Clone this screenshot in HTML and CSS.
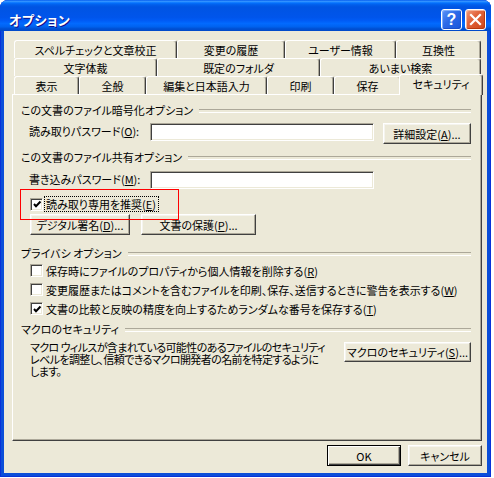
FILE: index.html
```html
<!DOCTYPE html>
<html lang="ja">
<head>
<meta charset="utf-8">
<title>オプション</title>
<link rel="stylesheet" href="styles.css">
</head>
<body>
<div class="window">
  <div class="titlebar">
    <span class="title">オプション</span>
    <div class="caption-buttons">
      <span class="cap-btn help">?</span>
      <span class="cap-btn close">
        <svg width="13" height="13" viewBox="0 0 13 13"><path d="M2 2 L11 11 M11 2 L2 11" stroke="#fff" stroke-width="2.2" stroke-linecap="square" fill="none"/></svg>
      </span>
    </div>
  </div>
  <div class="client">
    <div class="tabs">
      <div class="tab-row row1">
        <div class="tab">スペルチェックと文章校正</div>
        <div class="tab">変更の履歴</div>
        <div class="tab">ユーザー情報</div>
        <div class="tab">互換性</div>
      </div>
      <div class="tab-row row2">
        <div class="tab">文字体裁</div>
        <div class="tab">既定のフォルダ</div>
        <div class="tab">あいまい検索</div>
      </div>
      <div class="tab-row row3">
        <div class="tab">表示</div>
        <div class="tab">全般</div>
        <div class="tab">編集と日本語入力</div>
        <div class="tab">印刷</div>
        <div class="tab">保存</div>
        <div class="tab selected">セキュリティ</div>
      </div>
    </div>
    <div class="panel">
      <div class="group-header g1">この文書のファイル暗号化オプション</div>
      <div class="field f1">
        <span class="field-label">読み取りパスワード(<u>O</u>):</span>
        <span class="input"></span>
        <button class="btn btn-adv">詳細設定(<u>A</u>)...</button>
      </div>
      <div class="group-header g2">この文書のファイル共有オプション</div>
      <div class="field f2">
        <span class="field-label">書き込みパスワード(<u>M</u>):</span>
        <span class="input"></span>
      </div>
      <div class="check-row focus-row">
        <span class="check checked"><svg width="9" height="9" viewBox="0 0 9 9"><path d="M1 4 L3 6.2 L7.5 1.5" stroke="#000" stroke-width="2" fill="none"/></svg></span>
        <span class="focus-label">読み取り専用を推奨(<u>E</u>)</span>
      </div>
      <div class="button-row">
        <button class="btn btn-sign">デジタル署名(<u>D</u>)...</button>
        <button class="btn btn-protect">文書の保護(<u>P</u>)...</button>
      </div>
      <div class="group-header g3">プライバシ オプション</div>
      <div class="check-list">
        <div class="check-row">
          <span class="check"></span>
          <span class="check-label">保存時にファイルのプロパティから個人情報を削除する(<u>R</u>)</span>
        </div>
        <div class="check-row">
          <span class="check"></span>
          <span class="check-label">変更履歴またはコメントを含むファイルを印刷、保存、送信するときに警告を表示する(<u>W</u>)</span>
        </div>
        <div class="check-row">
          <span class="check checked"><svg width="9" height="9" viewBox="0 0 9 9"><path d="M1 4 L3 6.2 L7.5 1.5" stroke="#000" stroke-width="2" fill="none"/></svg></span>
          <span class="check-label">文書の比較と反映の精度を向上するためランダムな番号を保存する(<u>T</u>)</span>
        </div>
      </div>
      <div class="group-header g4">マクロのセキュリティ</div>
      <div class="macro-row">
        <p class="macro-text">マクロ ウィルスが含まれている可能性のあるファイルのセキュリティ<br>レベルを調整し、信頼できるマクロ開発者の名前を特定するように<br>します。</p>
        <button class="btn btn-macro">マクロのセキュリティ(<u>S</u>)...</button>
      </div>
      <div class="highlight"></div>
    </div>
    <div class="dialog-buttons">
      <button class="btn btn-dlg default">OK</button>
      <button class="btn btn-dlg">キャンセル</button>
    </div>
  </div>
</div>
</body>
</html>
```

FILE: styles.css
```css
* { box-sizing: border-box; }

body {
  margin: 0;
  background: #fff;
  font-family: "Noto Sans CJK JP", "Liberation Sans", sans-serif;
  font-size: 11px;
  font-feature-settings: "palt";
  color: #000;
}

.window {
  width: 491px;
  height: 477px;
  display: flex;
  flex-direction: column;
  background: #0B4ED9;
  border-radius: 8px 8px 0 0;
  overflow: hidden;
  box-shadow: inset 1px 0 #0831D9, inset -1px 0 #0831D9, inset 0 -1px #0831D9;
}

.titlebar {
  height: 31px;
  flex: none;
  display: flex;
  align-items: center;
  padding: 8px 5px 0 9px;
  background: linear-gradient(to bottom,
    #0058EE 0%, #3593FF 4%, #288EFF 6%, #127DFF 8%, #036FFC 10%,
    #0262EE 14%, #0057E5 20%, #0054E3 24%, #0055EB 56%, #005BF5 66%,
    #026AFE 76%, #0062EF 86%, #0052D6 92%, #0048C8 100%);
}

.title {
  flex: 1;
  color: #fff;
  font-weight: bold;
  font-size: 13px;
  letter-spacing: 0.5px;
  text-shadow: 1px 1px #0F1089;
}

.caption-buttons {
  display: flex;
  gap: 3px;
}

.cap-btn {
  width: 21px;
  height: 21px;
  border: 1px solid #fff;
  border-radius: 3px;
  display: flex;
  align-items: center;
  justify-content: center;
}

.help {
  background: linear-gradient(135deg, #5C95F8 0%, #2D6AE8 45%, #1A55DA 100%);
  box-shadow: inset -1px -1px #1C4FC9, inset 1px 1px #7FAEFB;
  color: #fff;
  font-family: "Liberation Sans", sans-serif;
  font-weight: bold;
  font-size: 16px;
  line-height: 1;
}

.close {
  background: linear-gradient(135deg, #F09A7B 0%, #E2643C 40%, #CC4518 100%);
  box-shadow: inset -1px -1px #B8390F, inset 1px 1px #F4B39A;
}

.client {
  flex: 1;
  margin: 0 4px 4px;
  background: #ECE9D8;
  padding: 9px 5px 0 8px;
  display: flex;
  flex-direction: column;
}

.tabs {
  margin-left: 2px;
  width: 467px;
}

.tab-row {
  display: grid;
  height: 18px;
}

.row1 { grid-template-columns: 163px 108px 111px 85px; }
.row2 { grid-template-columns: 143px 163px 161px; }
.row3 { grid-template-columns: 65px 67px 121px 67px 67px 80px; }

.tab {
  display: flex;
  align-items: center;
  justify-content: center;
  white-space: nowrap;
  background: #ECE9D8;
  border-top: 1px solid #fff;
  border-left: 1px solid #fff;
  border-right: 1px solid #404040;
  border-radius: 3px 3px 0 0;
  box-shadow: inset -1px 0 #ACA899;
  padding-top: 1px;
}

.tab.selected {
  position: relative;
  z-index: 1;
  margin: -2px -2px -1px -2px;
  padding-top: 0;
  padding-bottom: 2px;
}

.panel {
  position: relative;
  width: 470px;
  height: 347px;
  border: 1px solid;
  border-color: #fff #404040 #404040 #fff;
  box-shadow: inset -1px -1px #ACA899;
  padding: 8px 10px 0 8px;
  display: flex;
  flex-direction: column;
}

.group-header {
  display: flex;
  align-items: center;
  height: 14px;
  line-height: 14px;
  white-space: nowrap;
}

.group-header::after {
  content: "";
  flex: 1;
  height: 2px;
  border-top: 1px solid #ACA899;
  border-bottom: 1px solid #fff;
  margin-left: 6px;
  margin-top: 2px;
}

.g2 { margin-top: 6px; }
.g3 { margin-top: 11px; }
.g4 { margin-top: 4px; }

.field {
  display: flex;
  align-items: flex-start;
  margin-left: 8px;
}

.f1 { margin-top: 6px; }
.f2 { margin-top: 7px; }

.field-label {
  width: 121px;
  line-height: 14px;
  padding-top: 1px;
  white-space: nowrap;
}

.input {
  width: 224px;
  height: 18px;
  background: #fff;
  border: 1px solid;
  border-color: #ACA899 #fff #fff #ACA899;
  box-shadow: inset 1px 1px #404040, inset -1px -1px #ECE9D8;
}

.btn {
  font: inherit;
  color: #000;
  height: 21px;
  padding: 0;
  background: #ECE9D8;
  border: 1px solid;
  border-color: #fff #404040 #404040 #fff;
  box-shadow: inset -1px -1px #ACA899, inset 1px 1px #F5F4EE;
  white-space: nowrap;
  display: flex;
  align-items: center;
  justify-content: center;
}

.btn-adv {
  width: 88px;
  margin-left: 9px;
}

.check-row {
  display: flex;
  align-items: center;
  margin-left: 9px;
}

.focus-row {
  margin-top: 7px;
  height: 16px;
}

.check {
  width: 13px;
  height: 13px;
  flex: none;
  background: #fff;
  border: 1px solid;
  border-color: #ACA899 #fff #fff #ACA899;
  box-shadow: inset 1px 1px #404040, inset -1px -1px #ECE9D8;
  display: flex;
  align-items: center;
  justify-content: center;
}

.check svg {
  margin: 1px 0 0 1px;
}

.focus-label {
  margin-left: 1px;
  border: 1px dotted #000;
  padding: 0 2px 0 1px;
  height: 16px;
  line-height: 14px;
  white-space: nowrap;
}

.button-row {
  display: flex;
  gap: 11px;
  margin-top: 2px;
  margin-left: 9px;
}

.btn-sign { width: 100px; }
.btn-protect { width: 115px; }

.check-list {
  margin-top: 1px;
}

.check-list .check-row {
  height: 19px;
}

.check-label {
  margin-left: 3px;
  white-space: nowrap;
}

.macro-row {
  display: flex;
  align-items: flex-start;
  margin-top: 5px;
  margin-left: 9px;
}

.macro-text {
  margin: 0;
  line-height: 12px;
  letter-spacing: -0.6px;
  white-space: nowrap;
}

.btn-macro {
  margin-left: auto;
  margin-top: 1px;
  width: 127px;
  height: 20px;
}

.highlight {
  position: absolute;
  left: 7px;
  top: 94px;
  width: 159px;
  height: 31px;
  border: 1px solid #FF0000;
  pointer-events: none;
}

.dialog-buttons {
  display: flex;
  justify-content: flex-end;
  gap: 7px;
  margin-top: 4px;
}

.btn-dlg {
  width: 74px;
  height: 21px;
}

.btn-dlg.default {
  border-color: #000;
  box-shadow: inset 1px 1px #fff, inset -1px -1px #404040, inset -2px -2px #ACA899;
}
```
